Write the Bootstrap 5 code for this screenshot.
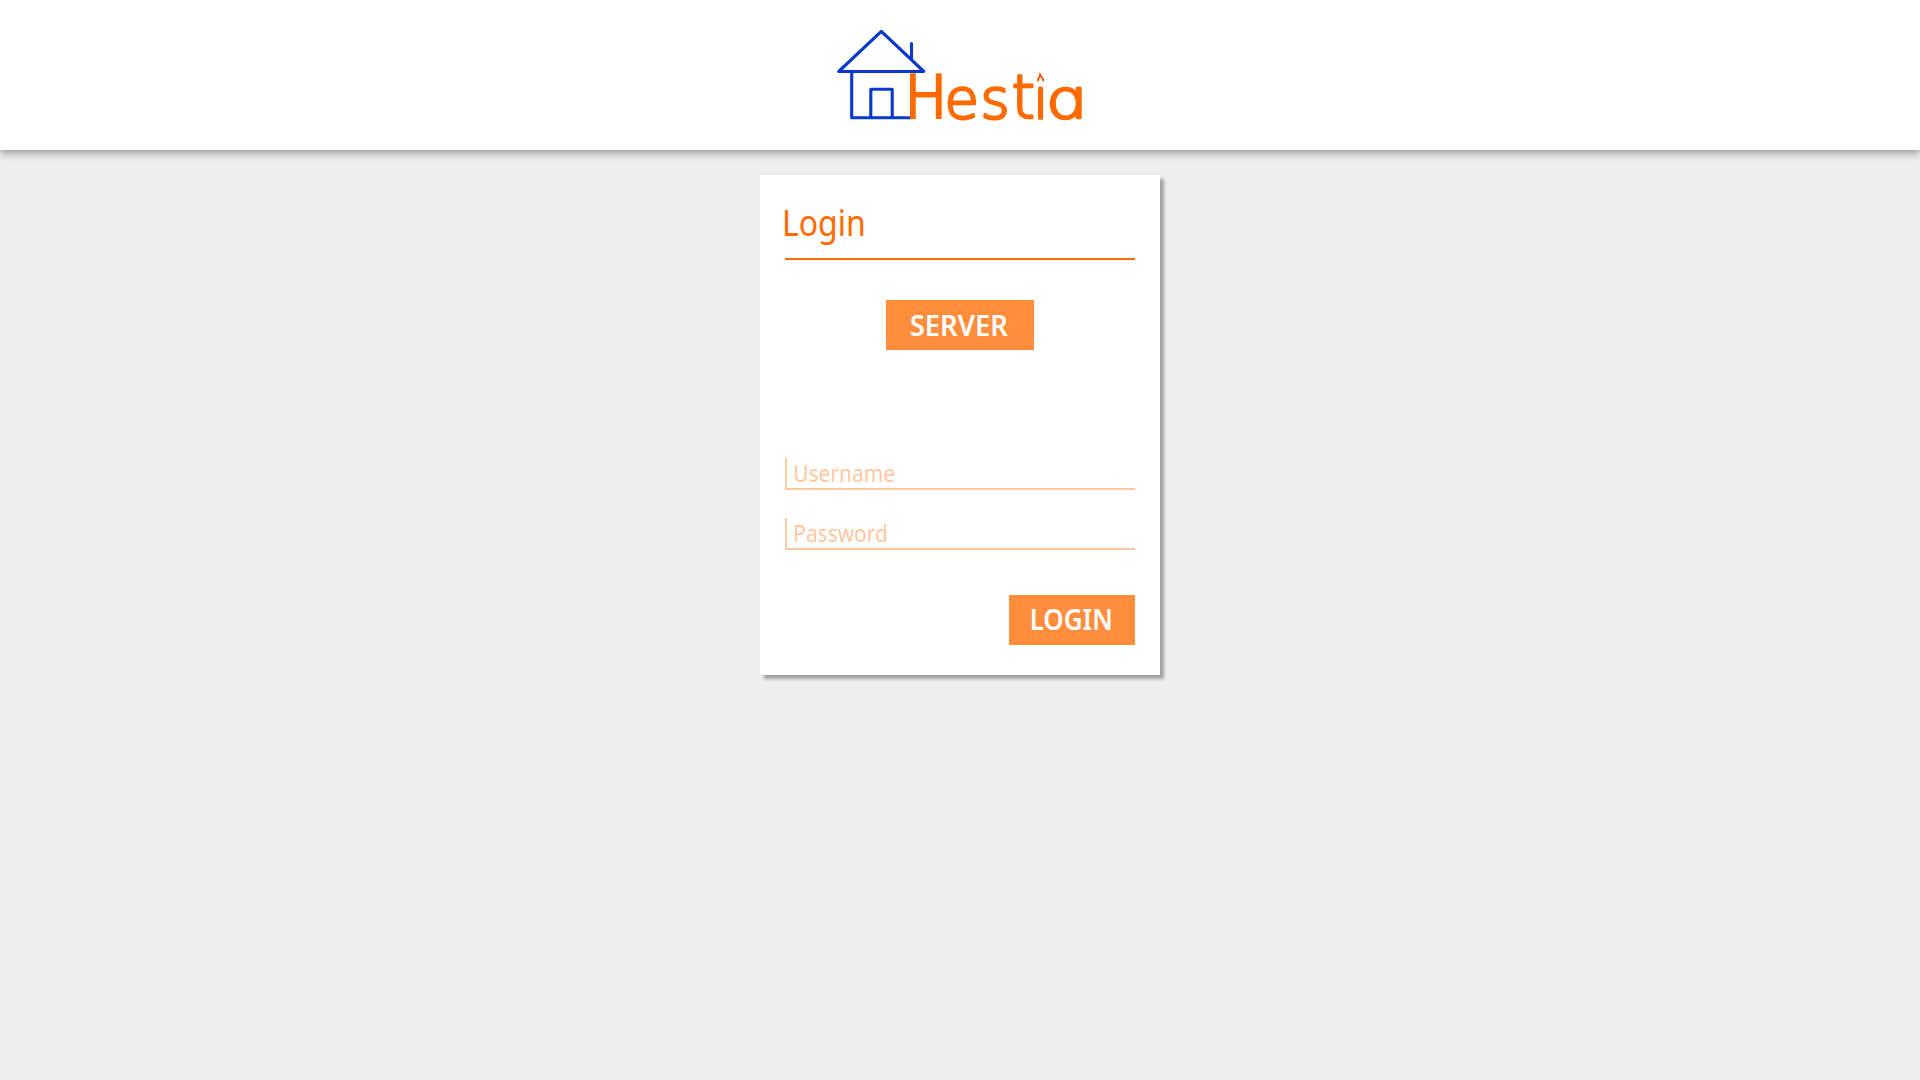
<!DOCTYPE html>
<html lang="en">
<head>
<meta charset="utf-8">
<title>Hestia</title>
<meta name="viewport" content="width=device-width, initial-scale=1">
<link rel="stylesheet" href="https://cdn.jsdelivr.net/npm/bootstrap@5.3.0/dist/css/bootstrap.min.css">
<style>
body { background: #eee; font-family: "Noto Sans", "Open Sans", sans-serif; min-height: 100vh; }
.site-header { height: 150px; box-shadow: 0 3px 8px rgba(0,0,0,.37); }
.login-panel { width: 400px; height: 500px; margin-top: 25px; padding: 25px; box-shadow: 4px 4px 3px rgba(0,0,0,.32); }
.panel-title { height: 60px; border-bottom: 2px solid #ff6a00; color: #ff6a00; font-size: 35.5px; line-height: 44px; }
.narrow { display: inline-block; transform: scaleX(.9); transform-origin: left center; white-space: nowrap; }
.panel-title .narrow { margin-left: -3px; }
.btn-hestia { --bs-btn-color: #fff; --bs-btn-bg: #ff8d3c; --bs-btn-hover-bg: #ff6a00; --bs-btn-hover-color: #fff; height: 50px; font-size: 29.5px; font-weight: 600; line-height: 50px; }
.btn-hestia .narrow { transform: translateX(-1px) scaleX(.93); transform-origin: center; margin: 0 -8px; }
.btn-hestia.btn-login .narrow { transform: translate(-1px, -1px) scaleX(.88); }
.btn-server { width: 148px; margin-top: 40px; }
.btn-login { width: 126px; margin-top: 45px; }
.field { height: 32px; border-left: 2px solid #ffc8a0; border-bottom: 2px solid #ffc8a0; }
.field-user { margin-top: 108px; }
.field-pass { margin-top: 28px; }
.field .form-control { width: 360px; height: 30px; padding: 0 0 0 7px; font-size: 23.5px; line-height: 30px; color: #ff6a00; transform: scaleX(.89); transform-origin: left center; }
.field .form-control::placeholder { color: #ffc8a0; opacity: 1; }
.wordmark { font-family: "DejaVu Sans", sans-serif; font-weight: 200; font-size: 56px; fill: #ff6a00; stroke: #ff6a00; stroke-width: 2.6; stroke-linejoin: round; }
.narrow-h { font-family: "DejaVu Sans Condensed", "DejaVu Sans"; font-stretch: condensed; font-weight: 400; font-size: 63px; stroke-width: .2; }
.tall-t { font-size: 60px; }
.round-a { font-family: Inter, sans-serif; font-weight: 200; font-size: 55px; font-feature-settings: "cv11" 1; }
</style>
</head>
<body>
<header class="site-header bg-white d-flex justify-content-center">
  <svg width="280" height="150" viewBox="820 0 280 150" role="img" aria-label="Hestia">
    <g fill="none" stroke="#0838cc" stroke-width="3.1" stroke-linecap="round" stroke-linejoin="round">
      <path d="M838.7 71.5 881.3 31.3 923.8 71.5Z"/>
      <path d="M911.5 43.5V58"/>
      <path d="M851.7 72V117.8H911"/>
      <path d="M870.8 117V89.3H892.2V117"/>
    </g>
    <text class="wordmark" y="118.7 117.5 117.5 117.5 117.5" x="904.5 944.5 980.5 1011.5 1033"><tspan class="narrow-h">H</tspan>es<tspan class="tall-t">t</tspan>i<tspan class="round-a" x="1047.5" y="117.5" textLength="38.5" lengthAdjust="spacingAndGlyphs">a</tspan></text>
    <rect x="1034" y="68" width="13" height="17.5" fill="#fff"/>
    <path d="M1038.3 81.3C1036.8 79 1039.8 77.8 1040.2 75C1041.5 77.5 1044.3 79.3 1042.9 81.3" fill="none" stroke="#ff5a10" stroke-width="2"/>
  </svg>
</header>
<main class="d-flex justify-content-center">
  <form class="login-panel bg-white d-flex flex-column">
    <h1 class="panel-title fw-normal m-0"><span class="narrow">Login</span></h1>
    <button type="button" class="btn btn-hestia btn-server rounded-0 border-0 p-0 align-self-center"><span class="narrow">SERVER</span></button>
    <div class="field field-user overflow-hidden"><input class="form-control bg-transparent border-0 rounded-0 shadow-none" type="text" placeholder="Username" aria-label="Username"></div>
    <div class="field field-pass overflow-hidden"><input class="form-control bg-transparent border-0 rounded-0 shadow-none" type="password" placeholder="Password" aria-label="Password"></div>
    <button type="button" class="btn btn-hestia btn-login rounded-0 border-0 p-0 align-self-end"><span class="narrow">LOGIN</span></button>
  </form>
</main>
<script src="https://cdn.jsdelivr.net/npm/bootstrap@5.3.0/dist/js/bootstrap.bundle.min.js"></script>
</body>
</html>
